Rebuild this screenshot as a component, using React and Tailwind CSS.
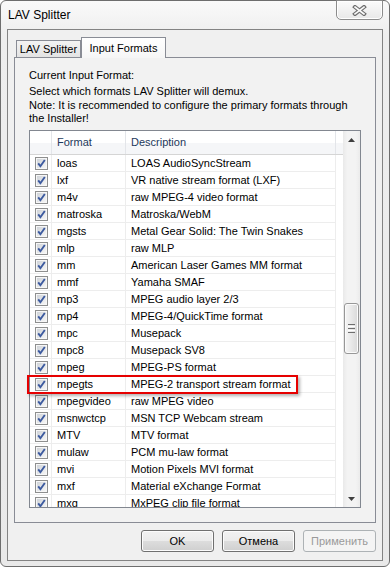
import React from "react";

const rows = [
  ["loas", "LOAS AudioSyncStream"],
  ["lxf", "VR native stream format (LXF)"],
  ["m4v", "raw MPEG-4 video format"],
  ["matroska", "Matroska/WebM"],
  ["mgsts", "Metal Gear Solid: The Twin Snakes"],
  ["mlp", "raw MLP"],
  ["mm", "American Laser Games MM format"],
  ["mmf", "Yamaha SMAF"],
  ["mp3", "MPEG audio layer 2/3"],
  ["mp4", "MPEG-4/QuickTime format"],
  ["mpc", "Musepack"],
  ["mpc8", "Musepack SV8"],
  ["mpeg", "MPEG-PS format"],
  ["mpegts", "MPEG-2 transport stream format"],
  ["mpegvideo", "raw MPEG video"],
  ["msnwctcp", "MSN TCP Webcam stream"],
  ["MTV", "MTV format"],
  ["mulaw", "PCM mu-law format"],
  ["mvi", "Motion Pixels MVI format"],
  ["mxf", "Material eXchange Format"],
  ["mxg", "MxPEG clip file format"],
];

function Check() {
  return (
    <svg width="13" height="13" viewBox="0 0 13 13">
      <defs>
        <linearGradient id="cbg" x1="0" y1="0" x2="1" y2="1">
          <stop offset="0" stopColor="#cfd3d8" />
          <stop offset="1" stopColor="#f6f6f6" />
        </linearGradient>
      </defs>
      <rect x="0.5" y="0.5" width="12" height="12" fill="#f7f7f7" stroke="#8e8f8f" />
      <rect x="2" y="2" width="9" height="9" fill="url(#cbg)" />
      <path d="M3.2 6.4 L5.4 9.2 L9.8 3" stroke="#3c5a9f" strokeWidth="1.9" fill="none" />
    </svg>
  );
}

function Btn({ children, disabled }) {
  if (disabled) {
    return (
      <div className="w-[73px] h-[22px] rounded-[3px] border border-[#adb2b5] bg-[#f4f4f4] flex items-center justify-center text-[11px] text-[#9a9a9a]">
        {children}
      </div>
    );
  }
  return (
    <div className="w-[73px] h-[22px] rounded-[3px] border border-[#707070] bg-[linear-gradient(to_bottom,#f2f2f2_0%,#ebebeb_50%,#dddddd_50%,#cfcfcf_100%)] shadow-[inset_0_0_0_1px_#fcfcfc] flex items-center justify-center text-[11px] text-black">
      {children}
    </div>
  );
}

export default function App() {
  return (
    <div className="w-[390px] h-[567px] bg-white font-['Liberation_Sans',Arial,sans-serif]">
      <div className="w-[390px] h-[567px] flex flex-col border border-[#6e6e6e] rounded-[6px] bg-[linear-gradient(to_bottom,#fafafa_0%,#eeeeee_6%,#e9e9e9_100%)]">
        <div className="h-[28px] flex items-start justify-between shrink-0">
          <div className="pl-[7px] h-[28px] flex items-center text-[12px] text-black">LAV Splitter</div>
          <div className="-mt-px mr-[6px] w-[47px] h-[20px] border border-[#8c8c8c] rounded-b-[5px] bg-[linear-gradient(to_bottom,#fbfbfb,#e8e8e8)] shadow-[inset_0_0_0_1px_#ffffff] flex items-center justify-center">
            <svg width="15" height="11" viewBox="0 0 15 11">
              <path d="M3 2 L12 9 M12 2 L3 9" stroke="#6f6f6f" strokeWidth="4" strokeLinecap="square" />
              <path d="M3 2 L12 9 M12 2 L3 9" stroke="#fafafa" strokeWidth="1.6" strokeLinecap="square" />
            </svg>
          </div>
        </div>

        <div className="mx-[6px] h-[532px] border border-[#838383] bg-[#f0f0f0] flex flex-col px-[6px] pt-[7px] shrink-0">
          <div className="h-[20px] flex items-end pl-[2px] shrink-0">
            <div className="w-[65px] h-[17px] border border-b-0 border-[#898c95] bg-[linear-gradient(to_bottom,#f3f3f3,#e3e3e3)] flex items-center justify-center text-[11px] text-black">
              LAV Splitter
            </div>
            <div className="relative z-10 -mb-px w-[85px] h-[21px] border border-b-0 border-[#898c95] bg-[linear-gradient(to_bottom,#ffffff,#f6f6f6)] flex items-center justify-center text-[11px] text-black">
              Input Formats
            </div>
          </div>

          <div className="h-[466px] border border-[#898c95] bg-[#f2f2f2] pt-[10px] pl-[14px] flex flex-col text-[11px] text-black shrink-0">
            <div className="h-[14px] leading-[14px] whitespace-nowrap">Current Input Format:</div>
            <div className="mt-[3px] h-[41px] leading-[13.5px] whitespace-nowrap">
              <div>Select which formats LAV Splitter will demux.</div>
              <div>Note: It is recommended to configure the primary formats through</div>
              <div>the Installer!</div>
            </div>
            <div className="mt-[4px] relative w-[332px] h-[378px] border border-[#828790] bg-white shrink-0">
              <div className="flex h-full overflow-hidden">
                <div className="w-[313px] h-full flex flex-col overflow-hidden">
                  <div className="flex w-[313px] h-[24px] shrink-0 border-b border-[#d5d5d5] bg-[linear-gradient(to_bottom,#ffffff_50%,#f5f6f8_50%)] text-[#1e395b]">
                    <div className="w-[22px] border-r border-[#e3e5e9]" />
                    <div className="w-[74px] border-r border-[#e3e5e9] pl-[5px] flex items-center">Format</div>
                    <div className="w-[210px] border-r border-[#e3e5e9] pl-[5px] flex items-center">Description</div>
                  </div>
                  {rows.map(([f, d]) => (
                    <div key={f} className="flex w-[306px] h-[17px] shrink-0 border-b border-[#ededed]">
                      <div className="w-[22px] border-r border-[#ededed] pl-[5px] flex items-center">
                        <Check />
                      </div>
                      <div className="w-[74px] border-r border-[#ededed] pl-[5px] flex items-center whitespace-nowrap">{f}</div>
                      <div className="w-[210px] border-r border-[#ededed] pl-[5px] flex items-center whitespace-nowrap">{d}</div>
                    </div>
                  ))}
                </div>
                <div className="w-[17px] h-full flex flex-col bg-[linear-gradient(to_right,#e9e9e9,#f3f3f3_25%,#f3f3f3_75%,#ebebeb)] shrink-0">
                  <div className="h-[17px] flex items-center justify-center shrink-0">
                    <svg width="7" height="4" viewBox="0 0 7 4">
                      <path d="M0 4 L3.5 0 L7 4 Z" fill="#3f3f3f" />
                    </svg>
                  </div>
                  <div className="flex-1 flex flex-col items-center">
                    <div className="mt-[155px] w-[15px] h-[51px] rounded-[3px] border border-[#979797] bg-[linear-gradient(to_right,#f5f5f5,#e8e8e8_50%,#d9d9d9)] shadow-[inset_0_0_0_1px_#fbfbfb] flex flex-col items-center justify-center gap-[1px]">
                      <div className="w-[7px] h-[1px] bg-[#6e6e6e]" />
                      <div className="w-[7px] h-[1px] bg-[#fefefe]" />
                      <div className="w-[7px] h-[1px] bg-[#6e6e6e]" />
                      <div className="w-[7px] h-[1px] bg-[#fefefe]" />
                      <div className="w-[7px] h-[1px] bg-[#6e6e6e]" />
                    </div>
                  </div>
                  <div className="h-[17px] flex items-center justify-center shrink-0">
                    <svg width="7" height="4" viewBox="0 0 7 4">
                      <path d="M0 0 L3.5 4 L7 0 Z" fill="#3f3f3f" />
                    </svg>
                  </div>
                </div>
              </div>
              <div className="absolute left-[-3px] top-[244px] w-[271px] h-[19px] border-2 border-[#e60000] shadow-[2px_2px_3px_rgba(0,0,0,0.3)]" />
            </div>
          </div>

          <div className="mt-[7px] flex justify-end gap-[8px] shrink-0">
            <Btn>OK</Btn>
            <Btn>Отмена</Btn>
            <Btn disabled>Применить</Btn>
          </div>
        </div>
      </div>
    </div>
  );
}
